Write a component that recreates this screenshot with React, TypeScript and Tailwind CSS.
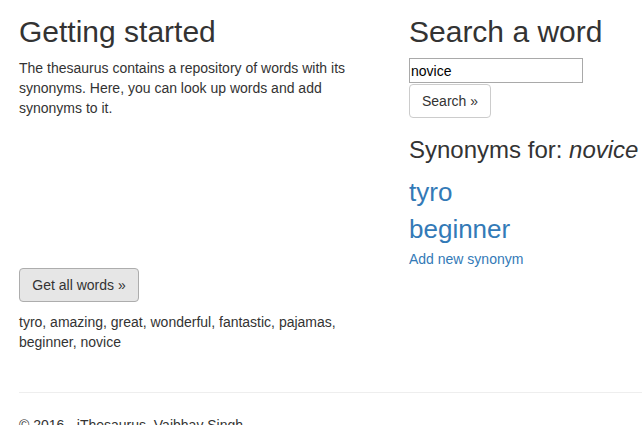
export default function App() {
  const words = ["tyro", "amazing", "great", "wonderful", "fantastic", "pajamas", "beginner", "novice"];
  const synonyms = ["tyro", "beginner"];

  return (
    <div
      className="w-[642px] h-[425px] overflow-hidden bg-white text-[14px] leading-[20px] text-[#333]"
      style={{ fontFamily: '"Liberation Sans", Arial, sans-serif' }}
    >
      <div className="w-[800px] pl-[19px]">
        {/* Top row */}
        <div className="grid grid-cols-[390px_390px]">
          <div className="w-[360px]">
            <h2 className="mt-[15px] mb-[10px] text-[30px] leading-[33px] font-medium">Getting started</h2>
            <p className="mb-[10px]">
              The thesaurus contains a repository of words with its synonyms. Here, you can look up words and add
              synonyms to it.
            </p>
          </div>

          <div className="w-[360px]">
            <h2 className="mt-[15px] mb-[10px] text-[30px] leading-[33px] font-medium">Search a word</h2>
            <form className="flex flex-col items-start" onSubmit={(e) => e.preventDefault()}>
              <input
                defaultValue="novice"
                className="w-[174px] h-[25px] border border-[#a9a9a9] px-[1px] text-[14px] text-black outline-none"
              />
              <button className="mt-[1px] w-[82px] h-[34px] border border-[#ccc] rounded-[4px] bg-white text-[#333]">
                Search »
              </button>
            </form>
            <h3 className="mt-[19px] text-[24px] leading-[26.4px] font-medium whitespace-nowrap">
              Synonyms for: <i>novice</i>
            </h3>
            <div className="mt-[11px]">
              {synonyms.map((s) => (
                <div key={s} className="text-[26px] leading-[37px]">
                  <a className="text-[#337ab7]" href="#">
                    {s}
                  </a>
                </div>
              ))}
            </div>
            <a className="block mt-[1px] text-[#337ab7]" href="#">
              Add new synonym
            </a>
          </div>
        </div>

        {/* Second row */}
        <div className="w-[360px] -mt-[1px]">
          <button className="w-[120px] h-[34px] border border-[#adadad] rounded-[4px] bg-[#e6e6e6] text-[#333]">
            Get all words »
          </button>
          <p className="mt-[10px]">{words.join(", ")}</p>
        </div>

        <hr className="mt-[40px] w-[780px] border-0 border-t border-[#eee]" />
        <footer className="mt-[22px]">
          <p>© 2016 - iThesaurus, Vaibhav Singh</p>
        </footer>
      </div>
    </div>
  );
}
